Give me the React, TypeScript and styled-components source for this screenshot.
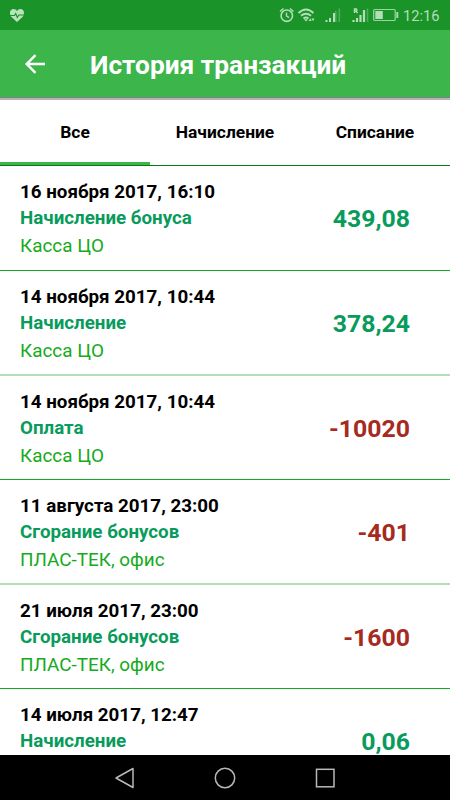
import React from 'react';
import styled, { createGlobalStyle } from 'styled-components';

const GlobalStyle = createGlobalStyle`
  * { box-sizing: border-box; }
  body { margin: 0; background: #fff; font-family: Roboto, 'Noto Sans', sans-serif; }
`;

const Screen = styled.div`
  width: 450px;
  height: 800px;
  display: flex;
  flex-direction: column;
  overflow: hidden;
  background: #fff;
`;

const StatusBar = styled.div`
  flex: none;
  height: 30px;
  display: flex;
  align-items: center;
  justify-content: space-between;
  background: #1a9428;
  color: #b4deb9;
`;

const StatusIcons = styled.svg`
  display: block;
  flex: none;
`;

const StatusRight = styled.div`
  display: flex;
  align-items: center;
  padding-right: 10px;
`;

const Clock = styled.span`
  width: 37px;
  margin-left: 3px;
  padding-top: 2px;
  font-size: 14.7px;
  line-height: 30px;
  white-space: nowrap;
`;

const AppBar = styled.header`
  flex: none;
  height: 70px;
  display: flex;
  align-items: center;
  background: #3cb64b;
  border-bottom: 2px solid #b5b5b5;
  box-shadow: inset 0 -1px #7c817c;
`;

const BackButton = styled.button`
  width: 90px;
  height: 68px;
  padding: 2px 0 0 25px;
  border: 0;
  background: none;
  color: #fff;
  text-align: left;
`;

const Title = styled.h1`
  margin: 2px 0 0;
  font-size: 26.3px;
  line-height: 34px;
  font-weight: 700;
  color: #fff;
  white-space: nowrap;
`;

const Tabs = styled.nav`
  flex: none;
  height: 66px;
  display: grid;
  grid-template-columns: repeat(3, 1fr);
  border-bottom: 1px solid #087a12;
`;

const Tab = styled.button<{ $active?: boolean }>`
  border: 0;
  border-bottom: 3px solid ${(p) => (p.$active ? '#3cb64b' : 'transparent')};
  padding: 2px 0 0;
  background: none;
  color: #000;
  font: 700 17.4px Roboto, sans-serif;
`;

const List = styled.main`
  flex: 1;
  min-height: 0;
  overflow: hidden;
`;

const Row = styled.article<{ $height: number; $soft: boolean }>`
  height: ${(p) => p.$height}px;
  display: flex;
  justify-content: space-between;
  padding: 14px 40px 0 20px;
  border-bottom: ${(p) => (p.$soft ? '2px solid #b4deb8' : '1px solid #13a925')};
  white-space: nowrap;
`;

const DateText = styled.div`
  font-size: 18.8px;
  line-height: 25px;
  font-weight: 700;
  color: #000;
`;

const Kind = styled.div`
  font-size: 18.75px;
  line-height: 26px;
  font-weight: 700;
  color: #089b5b;
`;

const Place = styled.div`
  font-size: 18.9px;
  line-height: 30px;
  color: #15aa20;
`;

const Amount = styled.div<{ $negative: boolean }>`
  padding-top: 24px;
  font-size: 24.8px;
  line-height: 30px;
  font-weight: 700;
  color: ${(p) => (p.$negative ? '#a52a20' : '#089b5b')};
`;

const NavBar = styled.footer`
  flex: none;
  height: 45px;
  display: flex;
  justify-content: center;
  align-items: center;
  gap: 76px;
  background: #000;
`;

const entries = [
  { date: '16 ноября 2017, 16:10', kind: 'Начисление бонуса', place: 'Касса ЦО', amount: '439,08', height: 105 },
  { date: '14 ноября 2017, 10:44', kind: 'Начисление', place: 'Касса ЦО', amount: '378,24', height: 105, soft: true },
  { date: '14 ноября 2017, 10:44', kind: 'Оплата', place: 'Касса ЦО', amount: '-10020', height: 104 },
  { date: '11 августа 2017, 23:00', kind: 'Сгорание бонусов', place: 'ПЛАС-ТЕК, офис', amount: '-401', height: 105, soft: true },
  { date: '21 июля 2017, 23:00', kind: 'Сгорание бонусов', place: 'ПЛАС-ТЕК, офис', amount: '-1600', height: 104 },
  { date: '14 июля 2017, 12:47', kind: 'Начисление', place: '', amount: '0,06', height: 105 },
];

const HeartIcon = () => (
  <StatusIcons width="34" height="30" viewBox="0 0 34 30">
    <path d="M17 22 11.500 17C9 14.500 9.500 9 13.500 9Q16 9 17 11Q18 9 20.500 9C24.500 9 25 14.500 22.500 17Z" fill="#b9e3bd" />
    <path d="M9 15.500h5.500l1.200-2 1.600 4 1.500-2.500H25" fill="none" stroke="#1a9428" strokeWidth="1.100" />
  </StatusIcons>
);

const SystemIcons = () => (
  <StatusIcons width="121" height="30" viewBox="279 0 121 30" fill="none" stroke="#b4deb9">
    <circle cx="286.800" cy="15.700" r="5.700" strokeWidth="1.600" />
    <path d="M286.500 12.500v3.500l2.500 1.700M280 11.500l3.500-3M293.500 11.500 290 8.500" strokeWidth="1.400" />
    <path d="M298.500 13Q306 6 313.500 13M301 15.800Q306 11.500 311 15.800M303.500 18.500Q306 16.500 308.500 18.500" strokeWidth="1.900" />
    <path d="m304 19.300 2 2.200 2-2.200zM308.700 21l1.500-2.700 1.500 2.700zM311.500 18.500h3l-1.500 2.800z" fill="#b4deb9" stroke="none" />
    <path d="M326.500 22v-2M330 22v-4M334 22v-9" strokeWidth="2" />
    <path d="M335.800 22V11M339.300 22V8.500" strokeWidth="1.600" opacity=".35" />
    <path d="M353.500 22v-2M357 22v-4M360.500 22v-7M364 22V10" strokeWidth="2.200" />
    <path d="M367.500 22V8.500" strokeWidth="1.600" opacity=".35" />
    <path d="M354.500 13V9h2q1 1 0 2h-2m1.500 0 1.500 2" strokeWidth="1.400" />
    <rect x="373.700" y="9.500" width="21.500" height="11" rx="1" strokeWidth="1.200" opacity=".85" />
    <path d="M375.300 11h7.500v8h-7.500z" fill="#b4deb9" stroke="none" />
    <path d="M397.300 12v6" strokeWidth="1.800" />
  </StatusIcons>
);

export default function App() {
  return (
    <>
      <GlobalStyle />
      <Screen>
        <StatusBar>
          <HeartIcon />
          <StatusRight>
            <SystemIcons />
            <Clock>12:16</Clock>
          </StatusRight>
        </StatusBar>
        <AppBar>
          <BackButton aria-label="Назад">
            <svg width="20" height="20" viewBox="0 0 20 20" fill="none" stroke="currentColor" strokeWidth="2.400">
              <path d="M20 10H2M10.500 1.200 1.700 10l8.800 8.800" />
            </svg>
          </BackButton>
          <Title>История транзакций</Title>
        </AppBar>
        <Tabs>
          <Tab $active>Все</Tab>
          <Tab>Начисление</Tab>
          <Tab>Списание</Tab>
        </Tabs>
        <List>
          {entries.map((e) => (
            <Row key={e.date + e.kind} $height={e.height} $soft={!!e.soft}>
              <div>
                <DateText>{e.date}</DateText>
                <Kind>{e.kind}</Kind>
                {e.place && <Place>{e.place}</Place>}
              </div>
              <Amount $negative={e.amount.startsWith('-')}>{e.amount}</Amount>
            </Row>
          ))}
        </List>
        <NavBar>
          <svg width="24" height="24" viewBox="0 0 24 24" fill="none" stroke="#b8b8b8" strokeWidth="1.500">
            <path d="M20 2.500v19L3 12z" strokeLinejoin="round" />
          </svg>
          <svg width="24" height="24" viewBox="0 0 24 24" fill="none" stroke="#b8b8b8" strokeWidth="1.500">
            <circle cx="12" cy="12" r="9.700" />
          </svg>
          <svg width="24" height="24" viewBox="0 0 24 24" fill="none" stroke="#b8b8b8" strokeWidth="1.500">
            <rect x="3.500" y="3.300" width="17.500" height="17.500" />
          </svg>
        </NavBar>
      </Screen>
    </>
  );
}
